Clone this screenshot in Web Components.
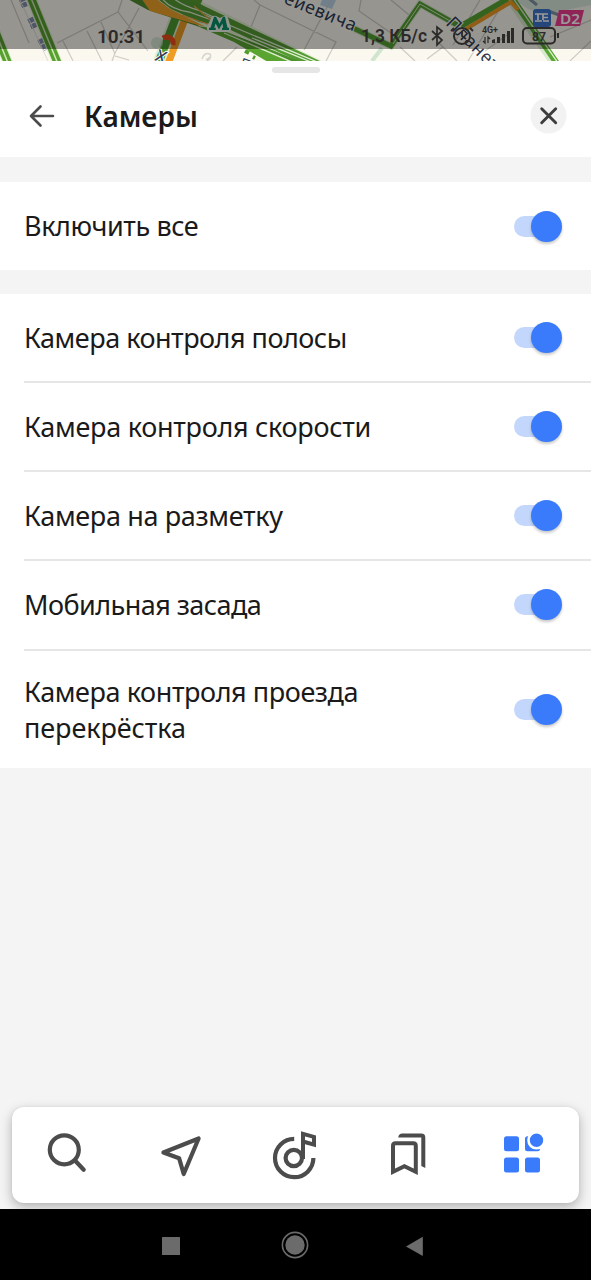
<!DOCTYPE html>
<html lang="ru">
<head>
<meta charset="utf-8">
<title>Камеры</title>
<style>
html,body{margin:0;height:100%;overflow:hidden}
body{font-family:"Noto Sans","Open Sans",sans-serif;color:#1a1a1a;background:#f4f4f4}
</style>
</head>
<body>
<camera-app></camera-app>
<script>
const define=(name,html,setup)=>customElements.define(name,class extends HTMLElement{
  constructor(){
    super();
    const t=document.createElement('template');
    t.innerHTML=html;
    this.attachShadow({mode:'open'}).append(t.content.cloneNode(true));
  }
  connectedCallback(){if(setup)setup(this,this.shadowRoot)}
});

define('map-strip',`<style>
:host{display:block;height:61px;flex:none;overflow:hidden;background:#fdfbf3}
svg{display:block}
text{font-family:"Noto Sans",sans-serif}
</style>
<svg width="591" height="61" viewBox="0 0 591 61" fill="none">
<rect width="591" height="61" fill="#fbf8f0"/>
<path d="M515 0h76v5l-45 9-18-5z" fill="#dbe9dc"/>
<path d="M322 0h14l-4 9-12-4z" fill="#b9d6ea"/>
<g stroke="#cfcbc5" stroke-width="1.2">
<path d="M11 0 29 43M57 43 118 12 148 51M63 41l10 20M87 31l15 30M101 22l14 32M118 12l4-12M139 8 115 53 112 61M115 56l14 4M251 27l9-22 76 37-10 19M260 5l-6-5M304 50l27-50M237 47l-14 14M361 0l-2 11 32 22M400 47l15 14M427 59l16-12M437 41l20 20M485 51l22-16M480 0l-27 45M505 0l-37 61M570 61l21-20M550 37l41-17M391 0l18 15"/>
</g>
<g stroke="#8090ab" stroke-width="6" stroke-dasharray="5 1"><path d="M21-3l4 10M30 18l5 11M40 39l6 11"/></g>
<path d="M20 0l28 61M27 0l28 61" stroke="#dcdbd8"/>
<g stroke="#dceccd" stroke-width="10"><path d="M-9 21 8 63M31-2 58 64"/></g>
<g stroke="#58a030" stroke-width="8"><path d="M-9 21 8 63M31-2 58 64"/></g>
<g stroke="#cfe8b5" stroke-width="1.5"><path d="M-9 21 8 63M31-2 58 64"/></g>
<path d="M176 17 158 64" stroke="#e0edce" stroke-width="12"/>
<path d="M176 17 158 64" stroke="#4e9a34" stroke-width="8"/>
<path d="M185 19 168 64" stroke="#ef9d25" stroke-width="7"/>
<path d="M121-4H190L326 63H270L235 39 196 25 150 9z" fill="#dfedcf"/>
<path d="M124-3H141L150 9 194 22 200 27 148 10z" fill="#4f8d2f"/>
<path d="M141-2H155L170 9 200 24 205 27 150 11z" fill="#f0a229"/>
<path d="M155-3H188L204 6 322 62H300L222 26 199 22 171 9z" fill="#559b33"/>
<path d="M197 26 218 29 258 45 290 62H268L234 42z" fill="#5aa531"/>
<path d="M219 29 252 42 302 62H292L249 42 216 28z" fill="#4b902a"/>
<path d="M161-3q8 12 28 15L220 23M173-2q10 8 25 12l20 9M224 33 292 62M252 38 311 62M205 15 322 64" stroke="#dfeed1" stroke-width="1.3"/>
<path d="M191-1 200 3M194 6 213 22M182 15 222 29" stroke="#e9a346" stroke-width="1.3"/>
<path d="m192-2 9 5" stroke="#58a030" stroke-width="6"/>
<path d="M163 38q3-2 7 0 4 2 3 7" stroke="#ef4b1c" stroke-width="5"/>
<circle cx="157" cy="43" r="6" fill="#bddbc2" opacity=".6"/>
<path d="M353 28 391 46 420 4 459 26" stroke="#d8e9cd" stroke-width="7"/>
<path d="M353 28 391 46 420 4 459 26" stroke="#55a135" stroke-width="5"/>
<path d="M393 44 420 4 450 21" stroke="#d2e9bc"/>
<path d="M461 28 510-1 556 65" stroke="#d8e9cd" stroke-width="9"/>
<path d="M461 26 508-1M512-2 558 65" stroke="#58a634" stroke-width="6"/>
<path d="M513-2 558 63" stroke="#d9edc7" stroke-width="1.4"/>
<path d="M466 29 511 2 518 10" stroke="#ef9b25" stroke-width="4"/>
<path d="M527-3l10 8M548 11l14 5" stroke="#7f95a6" stroke-width="3"/>
<path d="M372 61l10-13" stroke="#cfe5cd" stroke-width="4"/>
<path d="M202 59q2-7 8-5 2 4-3 7M206 60l4-3" stroke="#d5d5d0" stroke-width="1.5"/>
<path d="M245 51l4 2M253 57l2 1" stroke="#4d9d2b" stroke-width="4"/>
<g fill="#2f3b56" stroke="#fffdf5" stroke-width="2" paint-order="stroke">
<text font-size="18" transform="translate(283 3) rotate(22)" textLength="76">ейевича</text>
<text font-size="18" transform="translate(445 24) rotate(45)" textLength="67">Планет</text>
<text font-size="17" font-weight="500" transform="translate(154 60) rotate(22)">Х</text>
<text font-size="14" transform="translate(239 67) rotate(20)">П</text>
</g>
<path d="M210 32q-4-1-3-5l4-9q1-3 5-2l4 2 4-2q3-1 4 2l3 10q0 4-3 4z" fill="#f2f6ec"/>
<path d="M209 30v-2.200h1.500l3.500-11h2l3.500 7 3.500-7h2l2.500 11h1.500V30h-7v-2.200h1.200l-.8-4.300-3.400 6-3.400-6-1.300 4.300h1.500V30z" fill="#07906a"/>
<rect x="533" y="9" width="18" height="18" rx="3" fill="#3d75cd"/>
<path d="M535 14h13M538 14v6M543 14v6M535 21h7M543 17.500h5M543 21h6" stroke="#fff" stroke-width="1.700"/>
<path d="M559 10h25l-4 16h-25z" fill="#ee3c91"/>
<text x="560" y="23.500" font-size="15" font-weight="600" fill="#fff" textLength="20" lengthAdjust="spacingAndGlyphs">D2</text>
</svg>`);

define('status-bar',`<style>
:host{display:block;height:49px;background:rgba(0,0,0,.4)}
svg{display:block}
text{font-family:Roboto,sans-serif;font-weight:600}
</style>
<svg width="591" height="49" viewBox="0 0 591 49" fill="none" stroke="#2b2a29">
<g fill="#2b2a29" stroke="none">
<text x="97" y="42.500" font-size="19" textLength="48">10:31</text>
<text x="361" y="42" font-size="18" textLength="66" lengthAdjust="spacingAndGlyphs">1,3 КБ/с</text>
<text x="482" y="32.500" font-size="8.500" textLength="16" lengthAdjust="spacingAndGlyphs">4G+</text>
<text x="532" y="40.500" font-size="13" textLength="14" lengthAdjust="spacingAndGlyphs">87</text>
<path d="M492 43v-3l3-1v4zM497 43v-6h3v6zM502 43v-9h3v9zM507 43V31h3v12zM511 43V28h3v15z"/>
<rect x="557" y="33" width="2" height="5"/>
</g>
<path d="m432 31 10 9-5 5V27l5 4-10 9" stroke-width="1.700"/>
<circle cx="462" cy="36" r="8" stroke-width="2"/><path d="M462 31v5l4 3M454 28l-3 3M470 28l3 3" stroke-width="1.800"/>
<path d="M485 37v6l-2-2M488 43v-6l2 2" stroke-width="1.200"/>
<rect x="523" y="28" width="32" height="15.500" rx="4" stroke-width="2"/>
</svg>`);

define('sheet-header',`<style>
:host{display:flex;flex-direction:column;height:96px;flex:none;background:#fff}
.grip{width:48px;height:6px;border-radius:3px;background:#e6e6e6;margin:6px auto 0}
.bar{display:flex;align-items:center;height:84px;padding:1px 24px 0 28px;box-sizing:border-box}
h1{font:600 28px/36px "Noto Sans",sans-serif;letter-spacing:0;margin:0 0 0 28px;flex:1}
svg{display:block}
</style>
<div class="grip"></div>
<div class="bar">
<svg width="28" height="28" viewBox="0 0 28 28" fill="none" stroke="#4b4b4b" stroke-width="2.600" stroke-linecap="round" stroke-linejoin="round"><path d="M25 14H3M12.500 4.500 3 14l9.500 9.500"/></svg>
<h1><slot></slot></h1>
<svg width="37" height="37" viewBox="0 0 37 37"><circle cx="18.500" cy="18.500" r="18" fill="#f2f2f2"/><path d="m11.700 11.700 14 14m0-14-14 14" stroke="#3d3d3d" stroke-width="2.900" stroke-linecap="round"/></svg>
</div>`);

define('toggle-switch',`<style>
:host{display:grid;align-items:center;width:48px;height:32px;flex:none}
i,b{grid-area:1/1;display:block}
i{width:36px;height:21px;border-radius:11px;background:#c3d7fd}
b{width:31px;height:31px;border-radius:50%;background:#397bfb;justify-self:end;box-shadow:0 2px 3px rgba(0,0,0,.22)}
</style><i></i><b></b>`);

define('setting-row',`<style>
:host{display:flex;align-items:center;justify-content:space-between;box-sizing:border-box;height:var(--row-height,89.150px);margin-left:24px;padding-right:29px;border-bottom:2px solid #e6e6e6}
:host(:last-child){border-bottom:0}
span{font-size:27px;line-height:36px;max-width:400px;margin-top:var(--label-shift,0)}
</style><span><slot></slot></span><toggle-switch></toggle-switch>`,
(el,root)=>{root.querySelector('span').style.letterSpacing=(el.getAttribute('spacing')||0)+'px'});

define('setting-group',`<style>
:host{display:flex;flex-direction:column;background:#fff;flex:none}
</style><slot></slot>`);

define('tab-bar',`<style>
:host{display:flex;height:96px;margin:0 12px 6px;background:#fff;border-radius:12px;box-shadow:0 4px 12px rgba(0,0,0,.28),0 0 3px rgba(0,0,0,.05)}
div{flex:1;display:flex;align-items:center;justify-content:center}
svg{display:block;width:60px;height:60px;fill:none;stroke:#4c4c4c;stroke-width:4.200}
</style>
<div><svg viewBox="39 1125 60 60"><circle cx="64.300" cy="1149.800" r="14.500"/><path d="m75 1160.500 8.700 9.300" stroke-linecap="round"/></svg></div>
<div><svg viewBox="152.100 1125 60 60"><path d="m163.500 1152.500 35.200-14-14.900 35.500-4.600-15.800z" stroke-width="4.200" stroke-linejoin="round"/></svg></div>
<div><svg viewBox="266 1125 60 60"><path d="M294.200 1138.800a19.200 19.200 0 1 0 19.200 19.300"/><circle cx="293.800" cy="1158" r="8.200"/><path d="M303 1159v-25.200l11 3.100v7.800l-11-3.200" stroke-width="4"/></svg></div>
<div><svg viewBox="378.900 1125 60 60"><path d="M392.900 1171.700v-26q0-2.500 2.500-2.500h17.800q2.500 0 2.500 2.500v26l-11.400-5.500z" stroke-width="4"/><path d="M398.200 1137.500v-.5q.5-3.500 4-3.500h19q4 0 4 4v30.500l-4-2v-28.500z" fill="#4c4c4c" stroke="none"/></svg></div>
<div><svg viewBox="492 1125 60 60"><g fill="#397bfb" stroke="none"><rect x="504" y="1136.300" width="15" height="15" rx="2.500"/><rect x="525" y="1136.300" width="15" height="15" rx="2.500"/><rect x="504" y="1157.500" width="15" height="15" rx="2.500"/><rect x="525" y="1157.500" width="15" height="15" rx="2.500"/></g><circle cx="536.500" cy="1140.300" r="8" fill="#397bfb" stroke="#fff" stroke-width="2.600"/></svg></div>`);

define('system-nav',`<style>
:host{display:flex;justify-content:center;height:71px;background:#000;flex:none}
svg{display:block}
</style>
<svg width="591" height="71" viewBox="0 0 591 71" fill="#6b6b6b"><rect x="162" y="28" width="18" height="18" rx=".5"/><circle cx="295" cy="36" r="9.700"/><circle cx="295" cy="36" r="12.600" fill="none" stroke="#6b6b6b" stroke-width="1.600"/><path d="m406 37.500 16.800-9.800v19.400z"/></svg>`);

define('camera-app',`<style>
:host{display:flex;flex-direction:column;height:1280px;width:591px;background:#f4f4f4}
.top{display:grid;flex:none}
.top>*{grid-area:1/1}
status-bar{align-self:start}
.gap{height:25px;flex:none}
.gap.s{height:24px}
.single{--row-height:88px}
.tall{--row-height:117.400px;--label-shift:1.500px}
.fill{flex:1}
</style>
<div class="top"><map-strip></map-strip><status-bar></status-bar></div>
<sheet-header>Камеры</sheet-header>
<div class="gap"></div>
<setting-group><setting-row class="single" spacing="-.400">Включить все</setting-row></setting-group>
<div class="gap s"></div>
<setting-group>
<setting-row spacing="-.5">Камера контроля полосы</setting-row>
<setting-row spacing="-.28">Камера контроля скорости</setting-row>
<setting-row spacing="-.35">Камера на разметку</setting-row>
<setting-row spacing="-.55">Мобильная засада</setting-row>
<setting-row class="tall" spacing="-.42">Камера контроля проезда<br><span style="letter-spacing:-.08px">перекрёстка</span></setting-row>
</setting-group>
<div class="fill"></div>
<tab-bar></tab-bar>
<system-nav></system-nav>`);
</script>
</body>
</html>
